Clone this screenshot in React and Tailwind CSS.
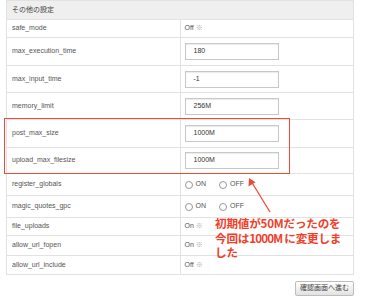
import React from 'react';

const rows = [
    { name: 'safe_mode', h: 'h-[18px]', type: 'text', value: 'Off' },
    { name: 'max_execution_time', h: 'h-[28px]', type: 'input', value: '180' },
    { name: 'max_input_time', h: 'h-[27px]', type: 'input', value: '-1' },
    { name: 'memory_limit', h: 'h-[27px]', type: 'input', value: '256M' },
    { name: 'post_max_size', h: 'h-[28px]', type: 'input', value: '1000M' },
    { name: 'upload_max_filesize', h: 'h-[26px]', type: 'input', value: '1000M' },
    { name: 'register_globals', h: 'h-[22px]', type: 'radio' },
    { name: 'magic_quotes_gpc', h: 'h-[22px]', type: 'radio' },
    { name: 'file_uploads', h: 'h-[18px]', type: 'text', value: 'On' },
    { name: 'allow_url_fopen', h: 'h-[20px]', type: 'text', value: 'On' },
    { name: 'allow_url_include', h: 'h-[19px]', type: 'text', value: 'Off' },
];

const Radio = ({ label }) => (
    <span className="flex items-center gap-[3px]">
        <span className="w-[8px] h-[8px] rounded-full border border-[#999] bg-white"></span>
        <span>{label}</span>
    </span>
);

const ValueCell = ({ row }) => {
    if (row.type === 'input') {
        return (
            <div className="w-[94px] h-[17px] border border-[#c8c8c8] shadow-[inset_0_1px_1px_rgba(0,0,0,0.08)] bg-white flex items-center pl-[8px] text-[#333]">
                {row.value}
            </div>
        );
    }
    if (row.type === 'radio') {
        return (
            <div className="flex items-center gap-[13px]">
                <Radio label="ON" />
                <Radio label="OFF" />
            </div>
        );
    }
    return (
        <span>
            {row.value} <span className="text-[#aaa]">※</span>
        </span>
    );
};

export default function App() {
    return (
        <div
            className="relative w-[365px] h-[300px] bg-white overflow-hidden"
            style={{ fontFamily: '"Liberation Sans", "Noto Sans CJK JP", sans-serif' }}
        >
            <div className="pl-[6px] pr-[11px]">
                <table className="w-[348px] border-collapse text-[7px] text-[#555] table-fixed">
                    <thead>
                        <tr className="h-[19px] bg-[#efefef]">
                            <th colSpan={2} className="text-left font-normal pl-[5px] border border-[#e2e2e2] text-[#444]">
                                その他の設定
                            </th>
                        </tr>
                    </thead>
                    <tbody>
                        {rows.map((row) => (
                            <tr key={row.name} className={row.h}>
                                <td className="w-[174px] pl-[5px] border border-[#e2e2e2]">{row.name}</td>
                                <td className="pl-[4px] border border-[#e2e2e2]">
                                    <ValueCell row={row} />
                                </td>
                            </tr>
                        ))}
                    </tbody>
                </table>
                <div className="flex justify-end mt-[6px]">
                    <button className="w-[59px] h-[15px] text-[7px] text-[#444] border border-[#bdbdbd] rounded-[2px] bg-gradient-to-b from-white to-[#e2e2e2]">
                        確認画面へ進む
                    </button>
                </div>
            </div>

            {/* Annotation */}
            <div className="absolute left-[4px] top-[118px] w-[286px] h-[56px] border-[1.5px] border-[#ef4a38]"></div>
            <svg className="absolute left-0 top-0" width="365" height="300">
                <line x1="270" y1="212" x2="251" y2="181" stroke="#ef4a38" strokeWidth="1.3" />
                <polygon points="249,178 248.5,186.5 255.5,182.2" fill="#ef4a38" />
            </svg>
            <div
                className="absolute left-[215px] top-[216px] text-[11.6px] leading-[14.5px] font-bold text-[#f0402a] whitespace-nowrap tracking-[-0.2px]"
                style={{ fontFamily: '"Noto Sans CJK JP", sans-serif' }}
            >
                初期値が50Mだったのを<br />
                今回は<span className="tracking-[-0.8px]">1000M </span>に変更しま<br />
                した
            </div>
        </div>
    );
}
